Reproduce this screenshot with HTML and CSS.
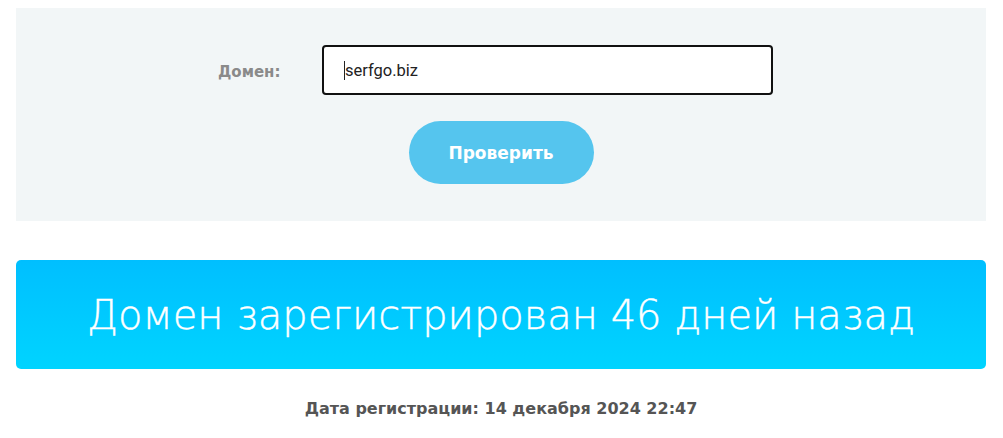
FILE: index.html
```html
<!DOCTYPE html>
<html lang="ru">
<head>
<meta charset="utf-8">
<title>Проверка домена</title>
<link rel="stylesheet" href="styles.css">
</head>
<body>
<div class="page">
  <form class="panel">
    <div class="row">
      <label class="label" for="domain">Домен:</label>
      <div class="input" id="domain">serfgo.biz</div>
    </div>
    <button class="btn" type="button">Проверить</button>
  </form>
  <div class="result">Домен зарегистрирован 46 дней назад</div>
  <div class="date">Дата регистрации: 14 декабря 2024 22:47</div>
</div>
</body>
</html>
```
FILE: styles.css
```css
html, body { margin: 0; padding: 0; background: #fff; }
body { font-family: "DejaVu Sans", sans-serif; }
.page { padding: 8px 17px 0 16px; }
.panel {
  background: #f2f6f7;
  height: 213px;
  box-sizing: border-box;
  padding-top: 37px;
  display: flex;
  flex-direction: column;
  align-items: center;
  margin: 0;
}
.row {
  display: flex;
  align-items: center;
  padding-right: 11px;
}
.label {
  width: 104px;
  font-size: 15px;
  font-weight: bold;
  color: #8a8a8a;
  padding-top: 3px;
}
.input {
  width: 451px;
  height: 50px;
  box-sizing: border-box;
  border: 2px solid #111;
  border-radius: 4px;
  background: #fff;
  padding-left: 20px;
  display: flex;
  align-items: center;
  font-family: Roboto, sans-serif;
  font-size: 16.5px;
  color: #222;
}
.input::before {
  content: "";
  width: 1px;
  height: 19px;
  background: #222;
}
.btn {
  margin-top: 26px;
  width: 185px;
  height: 63px;
  border: none;
  border-radius: 32px;
  background: #55c5ee;
  color: #fff;
  font-family: "DejaVu Sans", sans-serif;
  font-weight: bold;
  font-size: 17px;
}
.result {
  margin-top: 39px;
  height: 109px;
  border-radius: 5px;
  background: linear-gradient(#00bfff, #00d4ff);
  color: #fff;
  display: flex;
  align-items: center;
  justify-content: center;
  font-size: 40px;
  font-weight: 300;
  -webkit-text-stroke: 0.4px #fff;
}
.date {
  margin-top: 30px;
  text-align: center;
  font-size: 16px;
  font-weight: bold;
  color: #555;
}
```
